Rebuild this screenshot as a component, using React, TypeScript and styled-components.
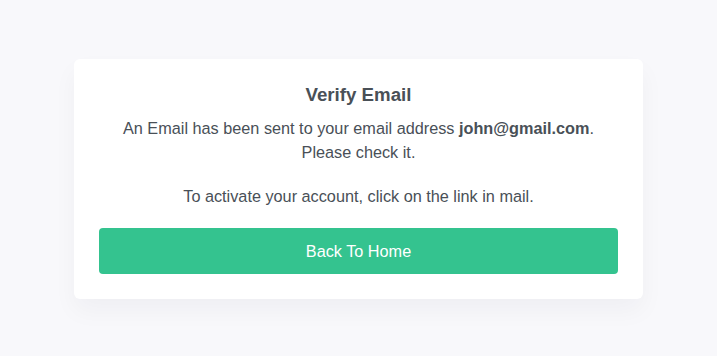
import React from "react";
import styled, { createGlobalStyle } from "styled-components";

const GlobalStyle = createGlobalStyle`
  html, body {
    margin: 0;
    padding: 0;
    background: #f8f8fb;
    font-family: "Liberation Sans", Arial, sans-serif;
    color: #495057;
  }
`;

const Page = styled.div`
  min-height: 356px;
  box-sizing: border-box;
  padding-top: 59px;
  display: flex;
  justify-content: center;
  align-items: flex-start;
`;

const Card = styled.div`
  width: 569px;
  box-sizing: border-box;
  padding: 25px;
  background: #fff;
  border-radius: 6px;
  box-shadow: 0 12px 24px rgba(18, 38, 63, 0.04);
  text-align: center;
`;

const Title = styled.h4`
  margin: 0 0 10px;
  font-size: 18.7px;
  line-height: 22px;
  font-weight: 700;
  color: #495057;
`;

const Text = styled.p<{ $gap?: number }>`
  margin: 0 0 ${(p) => p.$gap ?? 20}px;
  font-size: 16.25px;
  line-height: 24px;
  color: #495057;

  b {
    font-weight: 700;
  }
`;

const Button = styled.button`
  display: block;
  width: 100%;
  height: 46px;
  border: none;
  border-radius: 4px;
  background: #34c38f;
  color: #fff;
  font-family: inherit;
  font-size: 16.25px;
  cursor: pointer;
`;

export default function App() {
  return (
    <>
      <GlobalStyle />
      <Page>
        <Card>
          <Title>Verify Email</Title>
          <Text>
            An Email has been sent to your email address <b>john@gmail.com</b>.
            <br />
            Please check it.
          </Text>
          <Text>To activate your account, click on the link in mail.</Text>
          <Button>Back To Home</Button>
        </Card>
      </Page>
    </>
  );
}
